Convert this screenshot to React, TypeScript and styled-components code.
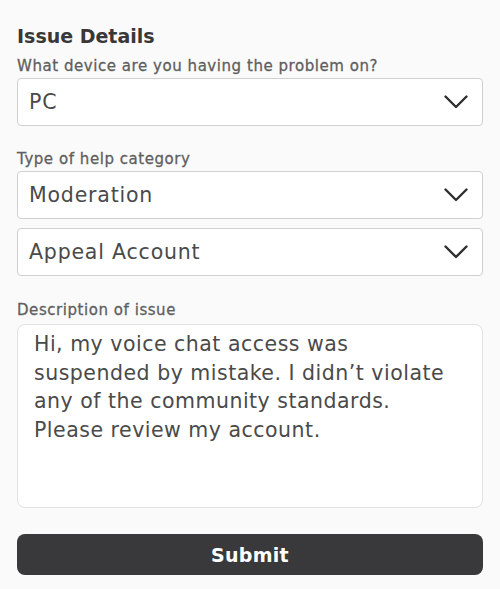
import styled, { createGlobalStyle } from 'styled-components'

const GlobalStyle = createGlobalStyle`
  html, body {
    margin: 0;
    padding: 0;
    background: #fafafa;
  }
  body {
    font-family: "DejaVu Sans", "Liberation Sans", sans-serif;
  }
`

const Form = styled.div`
  width: 466px;
  padding: 24px 17px 0 17px;
  display: flex;
  flex-direction: column;
`

const Title = styled.h2`
  margin: 0;
  font-size: 19px;
  font-weight: 700;
  color: #383838;
  line-height: 24px;
`

const Label = styled.div<{ $top?: number }>`
  margin-top: ${(p) => p.$top ?? 0}px;
  font-size: 15px;
  font-weight: 400;
  letter-spacing: 0.55px;
  color: #5f5f5f;
  line-height: 20px;
  -webkit-text-stroke: 0.3px #5f5f5f;
`

const Select = styled.div<{ $top?: number }>`
  margin-top: ${(p) => p.$top ?? 0}px;
  height: 46px;
  border: 1px solid #d0d0d0;
  border-radius: 4px;
  background: #fff;
  display: flex;
  align-items: center;
  justify-content: space-between;
  padding: 0 14px 0 11px;
  font-size: 20.5px;
  letter-spacing: 0.8px;
  color: #4a4a4a;
`

const Chevron = () => (
  <svg width="24" height="14" viewBox="0 0 24 14" fill="none">
    <path d="M1.5 1.5 L12 12 L22.5 1.5" stroke="#2f2f2f" strokeWidth="2.4" strokeLinecap="round" strokeLinejoin="round" />
  </svg>
)

const TextArea = styled.div`
  margin-top: 4px;
  height: 184px;
  box-sizing: border-box;
  border: 1px solid #e2e2e2;
  border-radius: 8px;
  background: #fff;
  padding: 5px 16px;
  font-size: 20.5px;
  letter-spacing: 0.5px;
  line-height: 28.5px;
  color: #4a4a4a;
`

const Button = styled.button`
  margin-top: 26px;
  height: 41px;
  border: none;
  border-radius: 8px;
  background: #39393b;
  color: #fff;
  font-family: inherit;
  font-size: 19px;
  font-weight: 700;
  letter-spacing: 0.3px;
`

export default function App() {
  return (
    <>
      <GlobalStyle />
      <Form>
        <Title>Issue Details</Title>
        <Label $top={8}>What device are you having the problem on?</Label>
        <Select $top={2}>
          <span>PC</span>
          <Chevron />
        </Select>
        <Label $top={23}>Type of help category</Label>
        <Select $top={2}>
          <span>Moderation</span>
          <Chevron />
        </Select>
        <Select $top={9}>
          <span>Appeal Account</span>
          <Chevron />
        </Select>
        <Label $top={24}>Description of issue</Label>
        <TextArea>
          Hi, my voice chat access was
          <br />
          suspended by mistake. I didn’t violate
          <br />
          any of the community standards.
          <br />
          Please review my account.
        </TextArea>
        <Button>Submit</Button>
      </Form>
    </>
  )
}
